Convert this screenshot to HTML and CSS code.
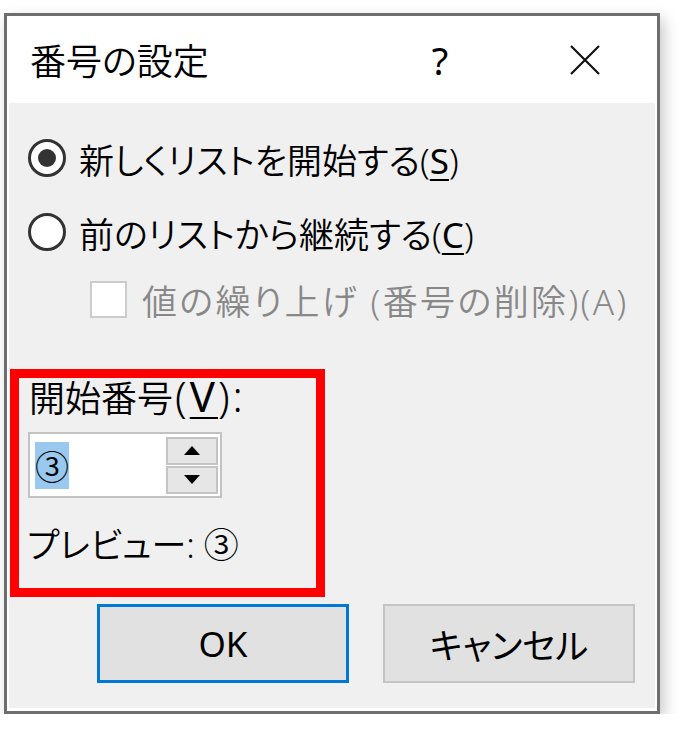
FILE: index.html
```html
<!DOCTYPE html>
<html lang="ja">
<head>
<meta charset="utf-8">
<title>番号の設定</title>
<link rel="stylesheet" href="styles.css">
</head>
<body>
<div class="dialog">
  <div class="titlebar">
    <span class="title">番号の設定</span>
    <span class="help">?</span>
    <span class="close">
      <svg width="32" height="32" viewBox="0 0 32 32"><path d="M2 2 L30 30 M30 2 L2 30" stroke="#111" stroke-width="2.2" fill="none"/></svg>
    </span>
  </div>
  <div class="body">
    <div class="opt row1">
      <span class="radio checked"><span class="dot"></span></span>
      <span class="label">新しくリストを開始する(<u>S</u>)</span>
    </div>
    <div class="opt row2">
      <span class="radio"></span>
      <span class="label">前のリストから継続する(<u>C</u>)</span>
    </div>
    <div class="opt row3">
      <span class="check"></span>
      <span class="label disabled">値の繰り上げ (番号の削除)(A)</span>
    </div>
    <div class="redbox">
      <div class="field-label">開始番号<span class="accel">(<u>V</u>):</span></div>
      <div class="spinbox">
        <span class="value"><span class="sel">③</span></span>
        <span class="spins">
          <span class="spin"><svg width="16" height="9" viewBox="0 0 16 9"><path d="M8 0 L16 9 L0 9 Z" fill="#000"/></svg></span>
          <span class="spin"><svg width="16" height="9" viewBox="0 0 16 9"><path d="M0 0 L16 0 L8 9 Z" fill="#000"/></svg></span>
        </span>
      </div>
      <div class="preview">プレビュー: ③</div>
    </div>
    <div class="buttons">
      <span class="btn default">OK</span>
      <span class="btn">キャンセル</span>
    </div>
  </div>
</div>
</body>
</html>
```
FILE: styles.css
```css
html, body {
  margin: 0;
  padding: 0;
  background: #ffffff;
}
body {
  font-family: "Noto Sans", "Noto Sans CJK JP", sans-serif;
  font-feature-settings: "palt";
  font-weight: 350;
  color: #000;
}
.dialog {
  box-sizing: border-box;
  margin: 13px 0 0 4px;
  width: 656px;
  height: 701px;
  border: 3px solid #6e6e6e;
  background: #ffffff;
  padding: 0 2px 3px 2px;
  display: flex;
  flex-direction: column;
  box-shadow: 4px 6px 14px rgba(0, 0, 0, 0.22);
}
.titlebar {
  height: 87px;
  display: flex;
  align-items: center;
  padding-left: 21px;
  flex: none;
}
.title {
  font-size: 36px;
  flex: 1;
  line-height: 1;
  margin-top: 4px;
}
.help {
  font-size: 38px;
  font-weight: 400;
  width: 30px;
  text-align: center;
  margin-right: 114px;
  line-height: 1;
}
.close {
  width: 32px;
  height: 32px;
  margin-right: 54px;
  display: flex;
}
.body {
  flex: 1;
  background: #f0f0f0;
  display: flex;
  flex-direction: column;
  padding-bottom: 24px;
}
.opt {
  height: 50px;
  display: flex;
  align-items: center;
  font-size: 35px;
}
.row1 { margin-top: 30px; padding-left: 19px; }
.row2 { margin-top: 24px; padding-left: 19px; }
.row3 { margin-top: 17px; padding-left: 81px; }
.radio {
  box-sizing: border-box;
  width: 38px;
  height: 38px;
  border: 3px solid #333;
  border-radius: 50%;
  background: #fff;
  display: flex;
  align-items: center;
  justify-content: center;
  margin-right: 13px;
}
.dot {
  width: 18px;
  height: 18px;
  border-radius: 50%;
  background: #333;
}
.check {
  box-sizing: border-box;
  width: 37px;
  height: 37px;
  border: 2px solid #cccccc;
  background: #fff;
  margin-right: 15px;
}
.label u,
.field-label u {
  font-weight: 400;
  text-underline-offset: 5px;
  text-decoration-thickness: 2px;
}
.disabled {
  color: #888888;
  letter-spacing: 2.4px;
}
.redbox {
  box-sizing: border-box;
  margin-top: 45px;
  margin-left: 1px;
  width: 315px;
  height: 228px;
  border: 9px solid #ff0000;
  padding-left: 9px;
  font-size: 35px;
}
.field-label {
  height: 36px;
  line-height: 36px;
  margin-left: 1px;
  font-size: 36px;
  white-space: nowrap;
}
.accel {
  font-size: 42px;
  letter-spacing: 3px;
  margin-left: 2px;
  line-height: 36px;
}
.spinbox {
  box-sizing: border-box;
  margin-top: 18px;
  width: 194px;
  height: 66px;
  border: 2px solid #c2c2c2;
  background: #fff;
  display: flex;
  align-items: center;
  padding: 0 2px 0 5px;
}
.value {
  flex: 1;
  display: flex;
  align-items: center;
}
.sel {
  background: #99c9ef;
  height: 47px;
  line-height: 47px;
  width: 34px;
  text-align: center;
  font-size: 34px;
  font-family: "Noto Sans CJK JP", sans-serif;
}
.spins {
  display: flex;
  flex-direction: column;
  gap: 1px;
  width: 52px;
}
.spin {
  box-sizing: border-box;
  height: 28px;
  border: 2px solid #c4c4c4;
  background: #e6e6e6;
  display: flex;
  align-items: center;
  justify-content: center;
}
.preview {
  margin-top: 27px;
  height: 40px;
  line-height: 40px;
  margin-left: -1px;
}
.buttons {
  margin-top: 7px;
  display: flex;
  justify-content: flex-end;
  gap: 34px;
  padding-right: 20px;
}
.btn {
  box-sizing: border-box;
  width: 252px;
  height: 79px;
  background: #e1e1e1;
  border: 2px solid #c4c4c4;
  display: flex;
  align-items: center;
  justify-content: center;
  font-size: 35px;
  font-weight: 400;
}
.btn.default {
  border: 3px solid #0078d7;
}
```
